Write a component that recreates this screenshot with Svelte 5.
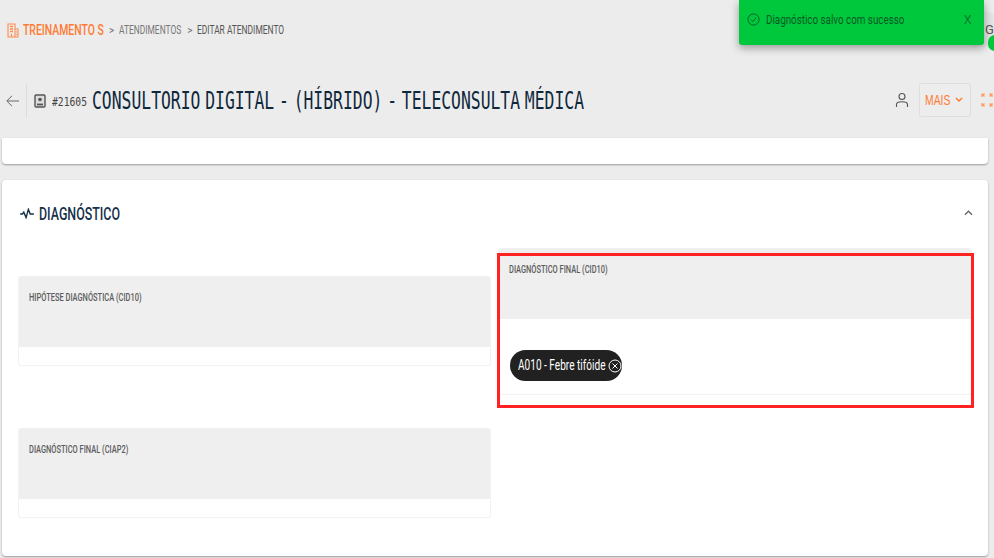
<script>
  const fields = {
    hipotese: 'HIPÓTESE DIAGNÓSTICA (CID10)',
    final: 'DIAGNÓSTICO FINAL (CID10)',
    ciap: 'DIAGNÓSTICO FINAL (CIAP2)'
  };
</script>

<div class="page">
  <header class="topbar">
    <svg class="crumb-icon" viewBox="0 0 12 15" width="12" height="15" fill="none" stroke="#ff8a4c" stroke-width="1.1">
      <path d="M1 14V1h7v13M8 6h3v8M.5 14h11" />
      <path d="M3 3.5h3M3 6h3M3 8.500h3M4.500 14v-3" stroke-width="1.300" />
      <path d="M9.500 8.500v1M9.500 11v1" />
    </svg>
    <span class="sq crumb-main">TREINAMENTO S</span>
    <span class="sep">&gt;</span>
    <span class="sq crumb">ATENDIMENTOS</span>
    <span class="sep">&gt;</span>
    <span class="sq crumb current">EDITAR ATENDIMENTO</span>
  </header>

  <section class="titlebar">
    <svg class="back" viewBox="0 0 13 12" width="13" height="12" fill="none" stroke="#666" stroke-width="1">
      <path d="M13 6H1M6 .8 .8 6 6 11.200" />
    </svg>
    <span class="divider"></span>
    <svg class="badge-icon" viewBox="0 0 12 14" width="12" height="14" fill="none" stroke="#555" stroke-width="1.400">
      <rect x="1" y="1" width="10" height="12" rx="1" fill="#ddd" />
      <circle cx="6" cy="5.500" r="1.800" fill="#555" stroke="none" />
      <path d="M3 10.500h6" stroke-width="1.800" />
    </svg>
    <span class="sq code">#21605</span>
    <h1 class="sq title">CONSULTORIO DIGITAL - (HÍBRIDO) - TELECONSULTA MÉDICA</h1>
    <div class="actions">
      <svg viewBox="0 0 14 16" width="14" height="16" fill="none" stroke="#555" stroke-width="1.100">
        <circle cx="7" cy="4.500" r="3" />
        <path d="M1.500 15v-2.500c0-2 2-2.700 5.500-2.700s5.500.7 5.500 2.700V15" />
      </svg>
      <button class="more">
        <span class="sq more-label">MAIS</span>
        <svg viewBox="0 0 8 6" width="8" height="6" fill="none" stroke="#ff7a33" stroke-width="1.500"><path d="M1 1l3 3 3-3" /></svg>
      </button>
      <svg class="expand" viewBox="0 0 12 14" width="12" height="14" fill="none" stroke="#ff9a60" stroke-width="1.200">
        <path d="M1 4V1h3M1 1l2.500 2.500M8 1h3v3M11 1 8.500 3.500M1 10v3h3M1 13l2.500-2.500M8 13h3v-3M11 13l-2.500-2.500" />
      </svg>
    </div>
  </section>

  <main class="content">
    <div class="card stub"></div>
    <section class="card diag">
      <div class="diag-head">
        <svg viewBox="0 0 15 12" width="14" height="11" fill="none" stroke="#16304a" stroke-width="1.500">
          <path d="M0 6.500h2.500l1.500-2 2.500 6 2.500-9 2 5h4" />
        </svg>
        <h2 class="sq diag-title">DIAGNÓSTICO</h2>
        <svg class="caret" viewBox="0 0 10 6" width="9" height="6" fill="none" stroke="#666" stroke-width="1.500"><path d="M1 5l4-4 4 4" /></svg>
      </div>
      <div class="grid">
        <div class="field offset">
          <div class="field-head"><span class="sq label">{fields.hipotese}</span></div>
          <div class="field-body"></div>
        </div>
        <div class="field tall">
          <div class="field-head"><span class="sq label">{fields.final}</span></div>
          <div class="field-body chips">
            <span class="chip">
              <span class="sq chip-label">A010 - Febre tifóide</span>
              <svg viewBox="0 0 14 14" width="14" height="14" fill="none" stroke="#fff" stroke-width="1"><circle cx="7" cy="7" r="6" /><path d="M4.500 4.500l5 5M9.500 4.500l-5 5" /></svg>
            </span>
          </div>
          <div class="highlight"></div>
        </div>
        <div class="field">
          <div class="field-head"><span class="sq label">{fields.ciap}</span></div>
          <div class="field-body"></div>
        </div>
      </div>
    </section>
  </main>

  <div class="toast">
    <svg viewBox="0 0 14 14" width="13" height="13" fill="none" stroke="#075a26" stroke-width="1"><circle cx="7" cy="7" r="6" /><path d="M4.300 7.200l2 2 3.600-4.200" /></svg>
    <span class="sq toast-text">Diagnóstico salvo com sucesso</span>
    <span class="sq toast-x">X</span>
  </div>
  <div class="avatar"><span>G</span></div>
  <div class="avatar-dot"></div>
</div>

<style>
  :global(body) { margin: 0; background: #ececec; }
  .page {
    position: relative;
    width: 994px;
    height: 558px;
    overflow: hidden;
    background: #ececec;
    font-family: Roboto, "Liberation Sans", sans-serif;
    display: flex;
    flex-direction: column;
  }
  .sq { display: inline-block; transform-origin: left center; white-space: nowrap; }

  .topbar { height: 60px; display: flex; align-items: center; padding-left: 7px; box-sizing: border-box; }
  .crumb-icon { flex: none; margin-right: 4px; }
  .crumb-main { color: #ff7a33; font-size: 14px; font-weight: 500; width: 80px; transform: scaleX(.745); }
  .sep { color: #666; font-size: 10px; margin: 0 5px 0 6px; }
  .crumb { color: #777; font-size: 12px; width: 62px; transform: scaleX(.7); }
  .crumb.current { color: #555; width: 87px; transform: scaleX(.7); }

  .titlebar { height: 78px; display: flex; align-items: center; padding: 4px 0 0 6px; box-sizing: border-box; }
  .back { flex: none; }
  .divider { width: 1px; height: 34px; background: #dcdcdc; margin: 0 7px 0 7px; }
  .badge-icon { flex: none; margin-right: 6px; }
  .code { font-family: "DejaVu Sans Mono", monospace; font-size: 13px; color: #444; width: 35px; transform: scaleX(.745); }
  .title { font-family: "DejaVu Sans Mono", monospace; font-size: 24px; font-weight: 400; word-spacing: -7.400px; color: #10283c; margin: 0 0 0 5px; width: 492px; transform: scaleX(.682); }
  .actions { margin-left: auto; display: flex; align-items: center; gap: 10px; margin-right: 1px; position: relative; top: -1px; }
  .more { width: 52px; height: 34px; display: flex; align-items: center; gap: 5px; padding: 0 0 0 5px; background: #ededed; border: 1px solid #dedede; border-radius: 3px; box-sizing: border-box; }
  .more-label { color: #ff7a33; font-size: 14px; font-weight: 500; width: 25px; transform: scaleX(.74); }

  .content { padding: 0 6px 0 2px; display: flex; flex-direction: column; gap: 16px; }
  .card { background: #fff; border-radius: 4px; box-shadow: 0 1px 2px rgba(0,0,0,.35); }
  .stub { height: 26px; border-radius: 0 0 4px 4px; }
  .diag { height: 376px; padding: 0 16px; box-sizing: border-box; }
  .diag-head { height: 68px; display: flex; align-items: center; gap: 5px; padding: 0 0 2px 2px; box-sizing: border-box; }
  .diag-title { color: #16304a; font-size: 18px; font-weight: 500; width: 82px; transform: scaleX(.69); margin: 0; }
  .caret { margin-left: auto; margin-right: -1px; }

  .grid { display: grid; grid-template-columns: 473px 474px; column-gap: 7px; row-gap: 33px; align-items: start; }
  .field { position: relative; border: 1px solid #f2f2f2; border-top: 0; border-radius: 3px; height: 90px; box-sizing: border-box; }
  .offset { margin-top: 28px; }
  .tall { height: 147px; }
  .field-head { height: 71px; background: #efefef; border-radius: 3px 3px 0 0; padding: 14px 0 0 10px; box-sizing: border-box; }
  .label { color: #5c5c5c; font-size: 10.500px; font-weight: 500; line-height: 14px; transform: scaleX(.712); position: relative; top: -4px; }
  .chips { padding-top: 31px; padding-left: 11px; }
  .chip { width: 112px; height: 31px; border-radius: 16px; background: #212121; color: #fff; display: flex; align-items: center; box-sizing: border-box; padding: 0 0 1px 8px; }
  .chip svg { flex: none; margin: 1px 0 0 3px; }
  .chip-label { font-size: 14px; width: 87px; transform: scaleX(.72); }
  .highlight { position: absolute; left: -2px; top: 5px; width: 477px; height: 155px; border: 3px solid #f22; box-sizing: border-box; pointer-events: none; }

  .toast { position: absolute; left: 739px; top: 0; width: 245px; height: 45px; background: #00c83c; border-radius: 0 0 3px 3px; box-shadow: 0 3px 8px rgba(0,0,0,.35); display: flex; align-items: center; box-sizing: border-box; padding: 0 12px 6px 8px; z-index: 2; }
  .toast-text { color: #075a26; font-size: 13px; margin-left: 6px; width: 139px; transform: scaleX(.755); }
  .toast-x { color: #075a26; font-size: 12px; font-weight: 300; margin-left: auto; width: 8px; }
  .avatar { position: absolute; left: 960px; top: 11px; width: 40px; height: 36px; border-radius: 18px; background: #e4e4e4; font-size: 13px; color: #555; display: flex; align-items: center; padding-left: 25px; box-sizing: border-box; }
  .avatar-dot { position: absolute; left: 988px; top: 35px; width: 14px; height: 16px; border-radius: 8px; background: #00c83c; z-index: 3; }
</style>
